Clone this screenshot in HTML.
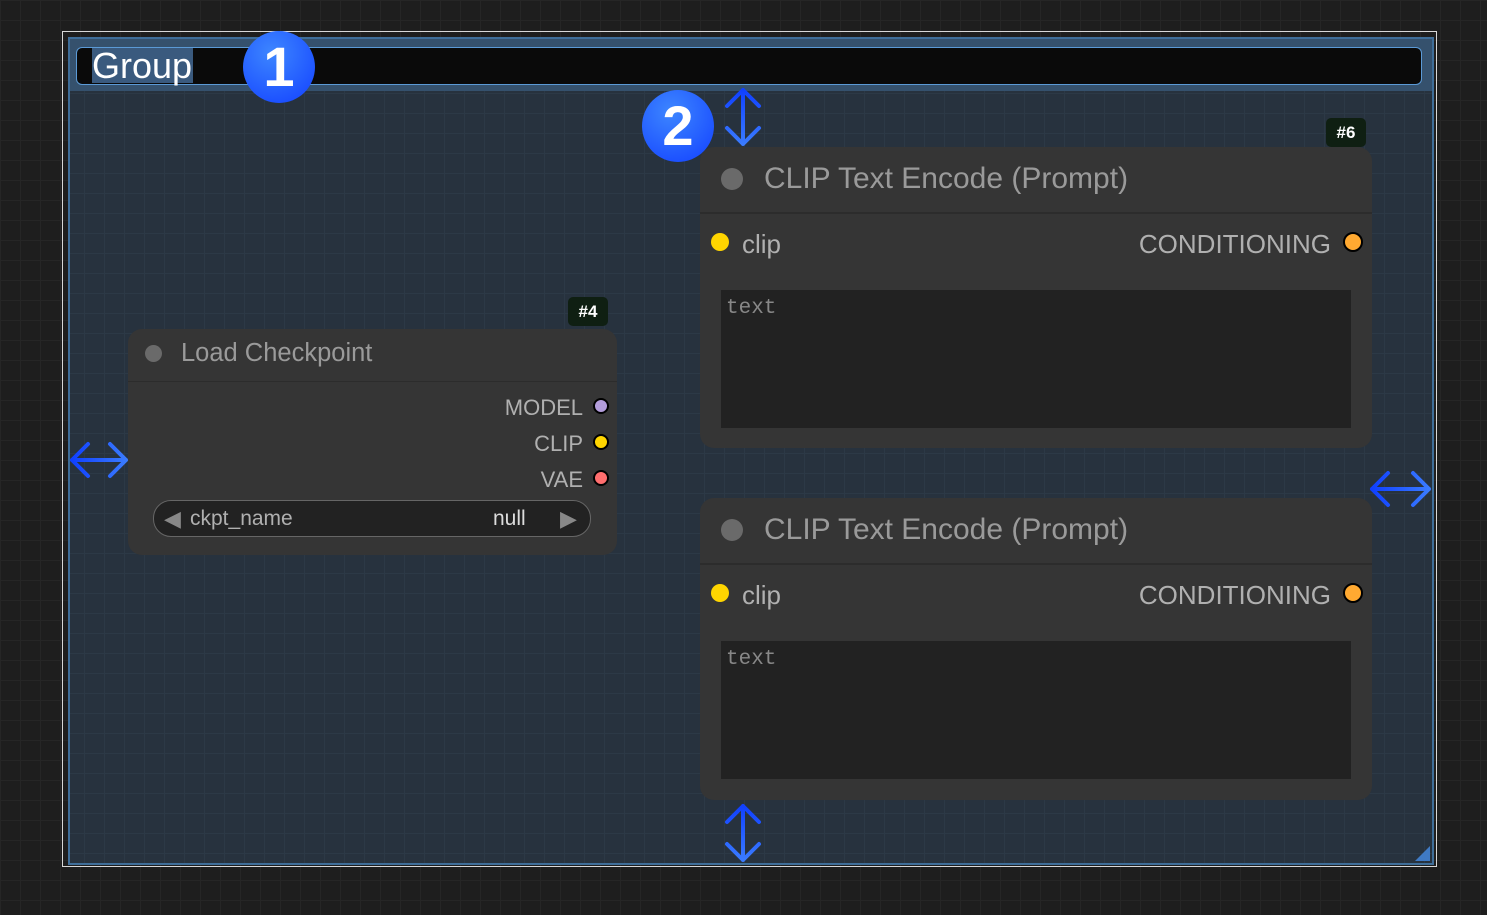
<!DOCTYPE html>
<html><head><style>
body{margin:0;width:1487px;height:915px;overflow:hidden;background-color:#1e1e1e;
background-image:linear-gradient(#262626 1px,transparent 1px),linear-gradient(90deg,#262626 1px,transparent 1px);background-size:20px 20px;font-family:"Liberation Sans",sans-serif;position:relative}
.a{position:absolute}
.frame{left:62px;top:31px;width:1373px;height:834px;border:1px solid #d8d8d8}
.grp{left:68px;top:37px;width:1362px;height:824px;border:2px solid #3f6e99;background-color:#27323e;
background-image:linear-gradient(#2c3946 1px,transparent 1px),linear-gradient(90deg,#2c3946 1px,transparent 1px);background-size:20px 20px;background-position:-6px -6px}
.tbar{left:70px;top:39px;width:1362px;height:52px;background:#35516d}
.tin{left:76px;top:47px;width:1344px;height:36px;background:#0a0a0a;border:1.5px solid #5b9ad6;border-radius:6px}
.node{background:#353535;border-radius:14px}
.title{color:#9a9a9a}
.dot{border-radius:50%;border:2px solid #000;box-sizing:border-box}
.lbl{color:#b0b0b0;font-size:24px}
.ta{background:#222;color:#888;font-family:"Liberation Mono",monospace;font-size:21px;padding:7px 5px;box-sizing:border-box}
.badge{background:#0f1f12;color:#fff;font-weight:bold;font-size:17px;border-radius:5px;text-align:center;line-height:29px}
.num{border-radius:50%;background:radial-gradient(circle at 40% 30%,#3d86ff,#1240ff);color:#fff;font-weight:bold;font-size:56px;text-align:center;line-height:72px;width:72px;height:72px}
</style></head><body>
<div class="a frame"></div>
<div class="a grp"></div>
<div class="a tbar"></div>
<div class="a tin"></div>
<div class="a" style="left:92px;top:48px;height:35px;background:#3a5a7e;color:#fff;font-size:36px;line-height:35px;padding-right:1px">Group</div>
<div class="a" style="left:1415px;top:846px;width:0;height:0;border-left:15px solid transparent;border-bottom:15px solid #3f7ac4"></div>

<!-- Load Checkpoint -->
<div class="a badge" style="left:568px;top:297px;width:40px;height:29px">#4</div>
<div class="a node" style="left:128px;top:329px;width:489px;height:226px"></div>
<div class="a" style="left:128px;top:381px;width:489px;height:1px;background:#2c2c2c"></div>
<div class="a" style="left:145px;top:345px;width:17px;height:17px;border-radius:50%;background:#6a6a6a"></div>
<div class="a title" style="left:181px;top:339px;font-size:25.5px">Load Checkpoint</div>
<div class="a lbl" style="right:904px;top:395px;font-size:22px">MODEL</div>
<div class="a dot" style="left:593px;top:398px;width:16px;height:16px;background:#b39ddb"></div>
<div class="a lbl" style="right:904px;top:431px;font-size:22px">CLIP</div>
<div class="a dot" style="left:593px;top:434px;width:16px;height:16px;background:#ffd500"></div>
<div class="a lbl" style="right:904px;top:467px;font-size:22px">VAE</div>
<div class="a dot" style="left:593px;top:470px;width:16px;height:16px;background:#ff6e6e"></div>
<div class="a" style="left:153px;top:500px;width:436px;height:35px;background:#222;border:1px solid #666;border-radius:18px"></div>
<div class="a" style="left:164px;top:506px;color:#888;font-size:22px">◀</div>
<div class="a" style="left:190px;top:507px;color:#b0b0b0;font-size:21px">ckpt_name</div>
<div class="a" style="left:493px;top:507px;color:#ddd;font-size:21px">null</div>
<div class="a" style="left:560px;top:506px;color:#888;font-size:22px">▶</div>

<!-- CLIP 1 -->
<div class="a badge" style="left:1326px;top:118px;width:40px;height:29px">#6</div>
<div class="a node" style="left:700px;top:147px;width:672px;height:301px"></div>
<div class="a" style="left:700px;top:212px;width:672px;height:2px;background:#2c2c2c"></div>
<div class="a" style="left:721px;top:168px;width:22px;height:22px;border-radius:50%;background:#6a6a6a"></div>
<div class="a title" style="left:764px;top:162px;font-size:30px">CLIP Text Encode (Prompt)</div>
<div class="a dot" style="left:711px;top:233px;width:18px;height:18px;background:#ffd500;border:none"></div>
<div class="a lbl" style="left:742px;top:229px;font-size:26px">clip</div>
<div class="a lbl" style="right:156px;top:229px;font-size:26px">CONDITIONING</div>
<div class="a dot" style="left:1343px;top:232px;width:20px;height:20px;background:#ffa931"></div>
<div class="a ta" style="left:721px;top:290px;width:630px;height:138px">text</div>

<!-- CLIP 2 -->
<div class="a node" style="left:700px;top:498px;width:672px;height:302px"></div>
<div class="a" style="left:700px;top:563px;width:672px;height:2px;background:#2c2c2c"></div>
<div class="a" style="left:721px;top:519px;width:22px;height:22px;border-radius:50%;background:#6a6a6a"></div>
<div class="a title" style="left:764px;top:513px;font-size:30px">CLIP Text Encode (Prompt)</div>
<div class="a dot" style="left:711px;top:584px;width:18px;height:18px;background:#ffd500;border:none"></div>
<div class="a lbl" style="left:742px;top:580px;font-size:26px">clip</div>
<div class="a lbl" style="right:156px;top:580px;font-size:26px">CONDITIONING</div>
<div class="a dot" style="left:1343px;top:583px;width:20px;height:20px;background:#ffa931"></div>
<div class="a ta" style="left:721px;top:641px;width:630px;height:138px">text</div>

<!-- markers -->
<div class="a num" style="left:243px;top:31px">1</div>
<div class="a num" style="left:642px;top:90px">2</div>
<svg class="a" style="left:0;top:0" width="1487" height="915" fill="none" stroke-width="4" stroke-linecap="round" stroke-linejoin="round">
<defs><linearGradient id="g" x1="0" y1="0" x2="1" y2="0"><stop offset="0" stop-color="#1040ff"/><stop offset="1" stop-color="#3a7bff"/></linearGradient>
<linearGradient id="gv" x1="0" y1="0" x2="0" y2="1"><stop offset="0" stop-color="#1040ff"/><stop offset="1" stop-color="#3a7bff"/></linearGradient></defs>
<g stroke="url(#gv)"><path d="M743 90V144M727 106L743 90L759 106M727 128L743 144L759 128"/>
<path d="M743 806V860M727 822L743 806L759 822M727 844L743 860L759 844"/></g>
<g stroke="url(#g)"><path d="M72 460H126M88 444L72 460L88 476M110 444L126 460L110 476"/>
<path d="M1372 489H1429M1388 473L1372 489L1388 505M1413 473L1429 489L1413 505"/></g>
</svg>
</body></html>
